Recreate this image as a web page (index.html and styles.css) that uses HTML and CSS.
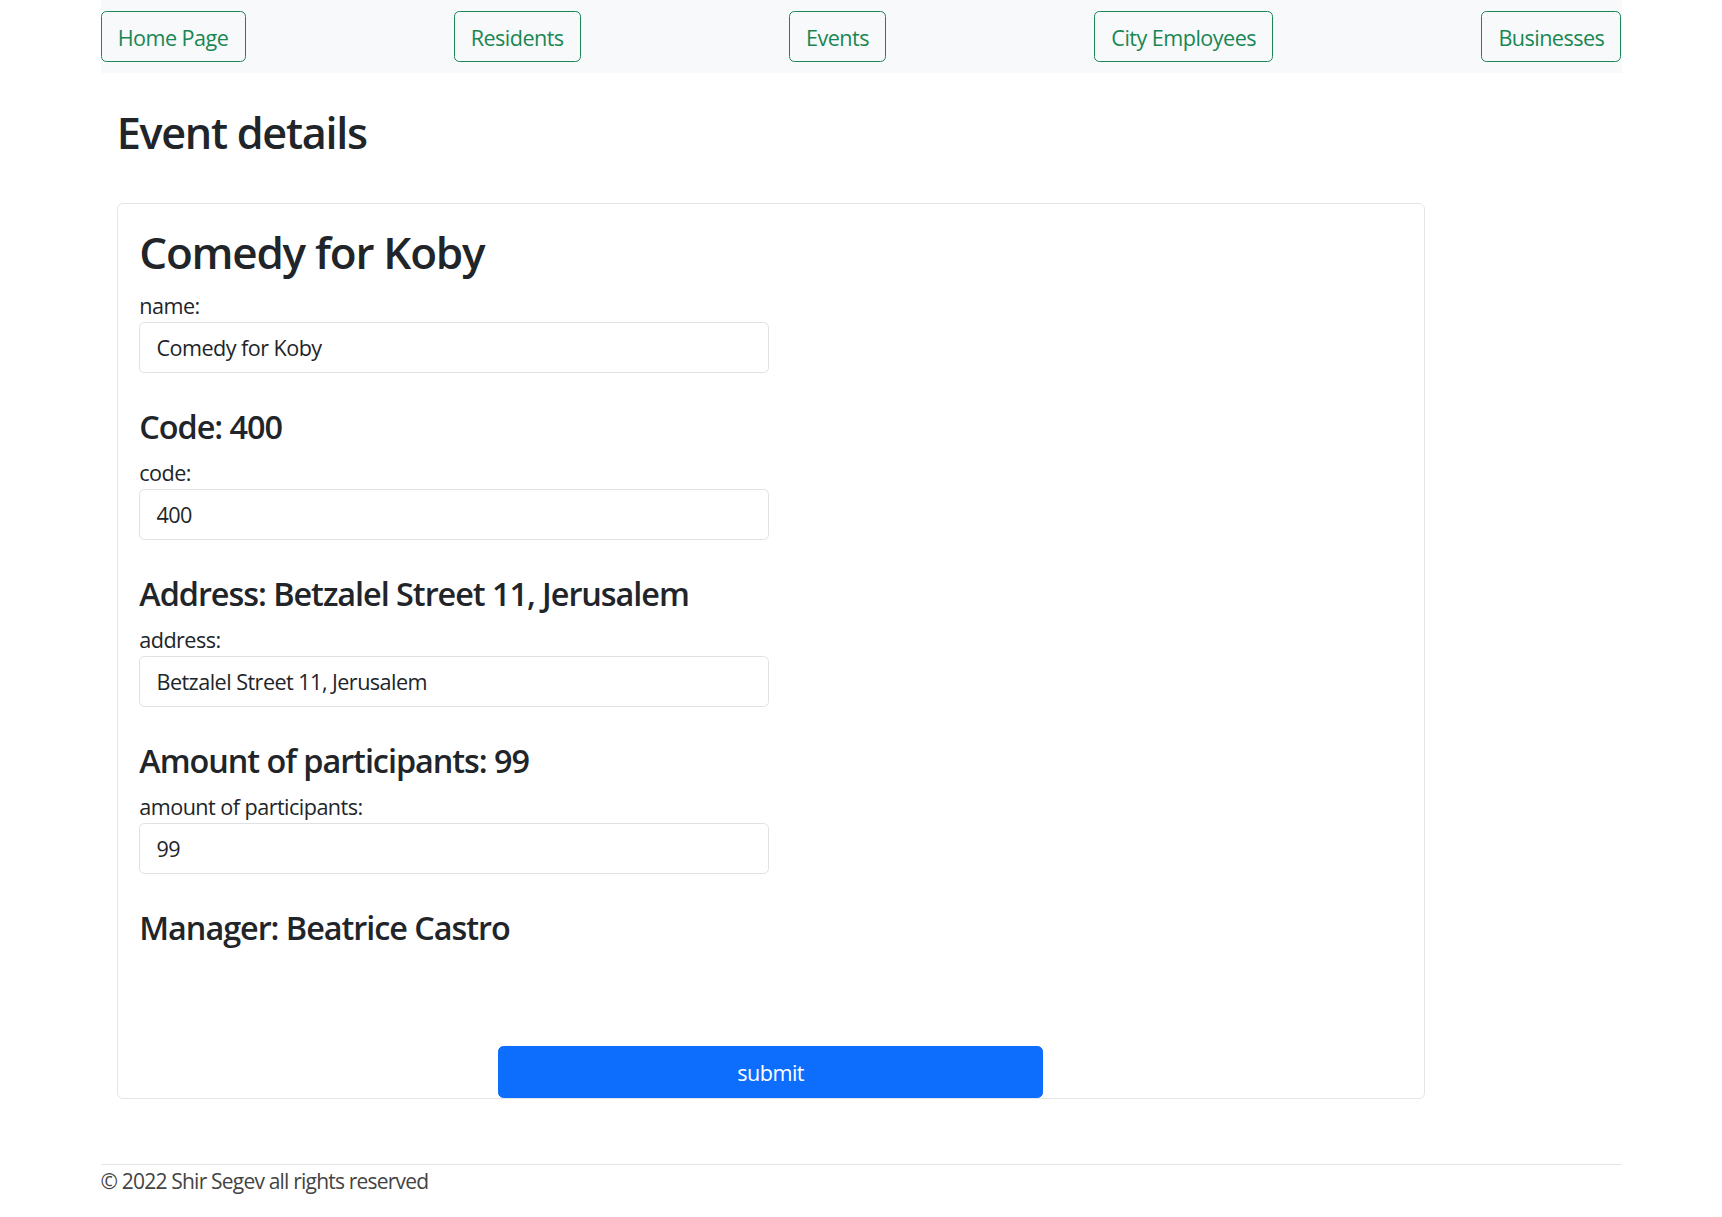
FILE: index.html
```html
<!DOCTYPE html>
<html lang="en">
<head>
<meta charset="utf-8">
<title>Event details</title>
<link rel="stylesheet" href="styles.css">
</head>
<body>
<nav class="topnav">
  <a class="nav-btn" href="#">Home Page</a>
  <a class="nav-btn" href="#">Residents</a>
  <a class="nav-btn" href="#">Events</a>
  <a class="nav-btn" href="#">City Employees</a>
  <a class="nav-btn" href="#">Businesses</a>
</nav>
<main class="page">
  <h2 class="page-title">Event details</h2>
  <section class="card">
    <h2 class="card-title">Comedy for Koby</h2>
    <div class="field">
      <label class="field-label" for="f-name">name:</label>
      <input class="field-input" id="f-name" type="text" value="Comedy for Koby">
    </div>
    <h4 class="field-heading">Code: 400</h4>
    <div class="field">
      <label class="field-label" for="f-code">code:</label>
      <input class="field-input" id="f-code" type="text" value="400">
    </div>
    <h4 class="field-heading">Address: Betzalel Street 11, Jerusalem</h4>
    <div class="field">
      <label class="field-label" for="f-address">address:</label>
      <input class="field-input" id="f-address" type="text" value="Betzalel Street 11, Jerusalem">
    </div>
    <h4 class="field-heading">Amount of participants: 99</h4>
    <div class="field">
      <label class="field-label" for="f-amount">amount of participants:</label>
      <input class="field-input" id="f-amount" type="text" value="99">
    </div>
    <h4 class="field-heading">Manager: Beatrice Castro</h4>
    <div class="actions">
      <button class="submit-btn" type="button">submit</button>
    </div>
  </section>
</main>
<footer class="footer">
  <div class="footer-text">© 2022 Shir Segev all rights reserved</div>
</footer>
</body>
</html>
```

FILE: styles.css
```css
* { box-sizing: border-box; }

html, body {
  margin: 0;
  padding: 0;
  background: #ffffff;
}

body {
  font-family: "Open Sans", "Noto Sans", "Liberation Sans", sans-serif;
  font-size: 21.6px;
  line-height: 32.4px;
  color: #212529;
  letter-spacing: -0.025em;
}

.topnav {
  width: 1521px;
  margin: 0 auto;
  background: #f8f9fa;
  padding: 11px 0;
  display: flex;
  justify-content: space-between;
  align-items: center;
}

.nav-btn {
  display: inline-flex;
  align-items: center;
  height: 51.3px;
  padding: 3px 16.2px 0;
  border: 1px solid #198754;
  border-radius: 5.4px;
  color: #198754;
  text-decoration: none;
  font-size: 21.6px;
}

.page {
  width: 1521px;
  margin: 0 auto;
  padding: 0 16.2px;
}

.page-title {
  margin: 34px 0 0;
  font-size: 43.2px;
  line-height: 51.84px;
  font-weight: 600;
  letter-spacing: -0.03em;
}

.card {
  width: 1308px;
  margin-top: 44px;
  border: 1px solid rgba(0, 0, 0, 0.1);
  border-radius: 6px;
  padding: 21.6px 21.6px 0;
}

.card-title {
  margin: 0 0 12px;
  font-size: 44px;
  line-height: 52px;
  font-weight: 600;
  letter-spacing: -0.028em;
}

.field {
  width: 630px;
}

.field-label {
  display: block;
  line-height: 32.4px;
}

.field-input {
  display: block;
  width: 100%;
  height: 51px;
  padding: 0 16.2px;
  border: 1px solid #dee2e6;
  border-radius: 5.4px;
  font-family: inherit;
  font-size: 21.6px;
  letter-spacing: -0.025em;
  color: #212529;
  background: #ffffff;
}

.field-heading {
  margin: 34px 0 10.8px;
  font-size: 32.4px;
  line-height: 38.9px;
  font-weight: 600;
  letter-spacing: -0.032em;
}

.actions {
  display: flex;
  justify-content: center;
  padding-top: 88px;
}

.submit-btn {
  width: 545px;
  height: 52px;
  border: 1px solid #0d6efd;
  border-radius: 5.4px;
  background: #0d6efd;
  color: #ffffff;
  font-family: inherit;
  font-size: 21.6px;
  letter-spacing: -0.025em;
  cursor: pointer;
}

.footer {
  width: 1521px;
  margin: 65px auto 0;
  border-top: 1px solid #e6e6e6;
}

.footer-text {
  color: #444;
  font-size: 21px;
  line-height: 32.4px;
  letter-spacing: -0.038em;
}
```
